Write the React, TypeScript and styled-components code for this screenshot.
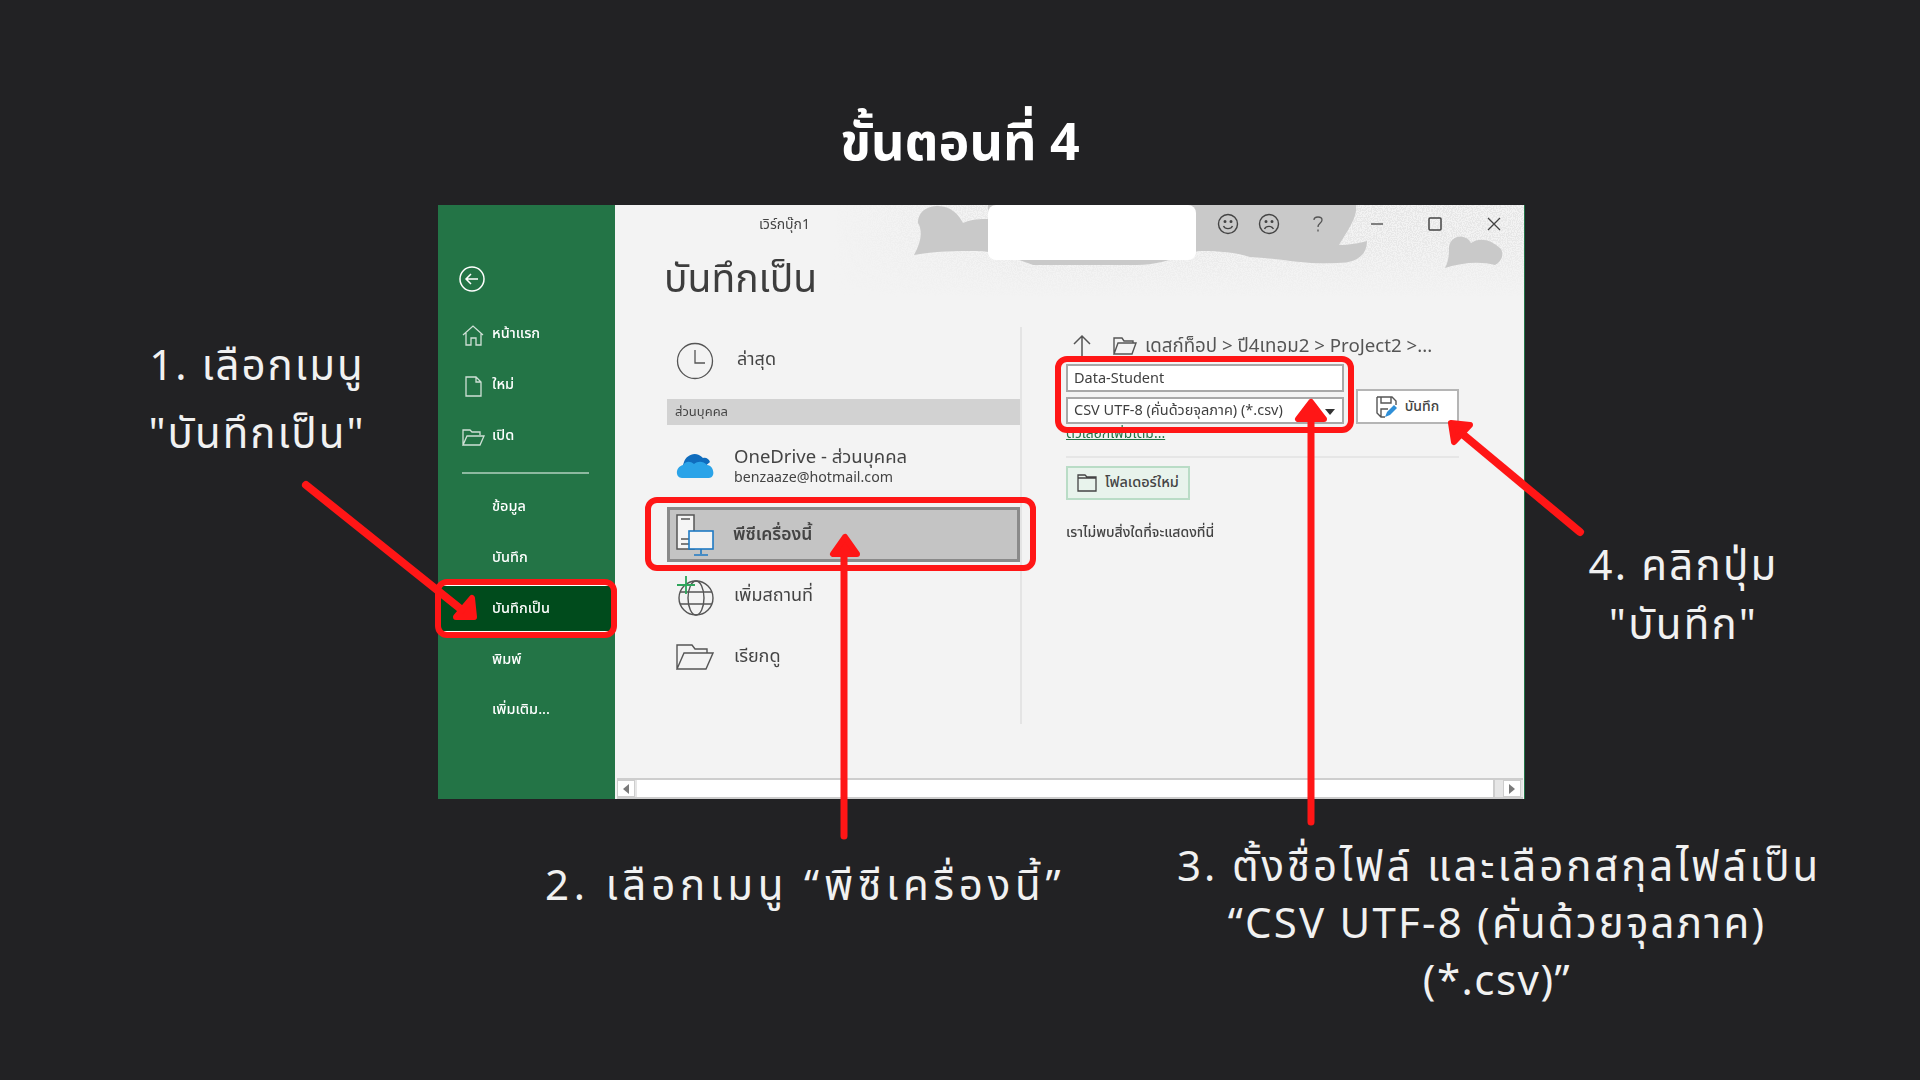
import React, { FC } from 'react';
import styled, { createGlobalStyle, css } from 'styled-components';

const thai = `"Noto Sans Thai", "Noto Sans", "Open Sans", "Liberation Sans", sans-serif`;
const red = '#ff1616';

const GlobalStyle = createGlobalStyle`
  html, body {
    margin: 0;
    background: #222224;
  }
  * {
    box-sizing: border-box;
  }
`;

const soft = css`
  filter: blur(0.3px);
`;

const Slide = styled.div`
  position: relative;
  width: 1920px;
  height: 1080px;
  overflow: hidden;
  background: #222224;
  font-family: ${thai};
`;

const Title = styled.h1`
  height: 205px;
  margin: 0;
  padding-top: 111px;
  text-align: center;
  color: #fff;
  font-size: 52px;
  font-weight: 700;
  line-height: 66px;
`;

const Stage = styled.div`
  display: flex;
  height: 594px;
`;

const LeftNotes = styled.div`
  width: 438px;
  flex: none;
  padding: 128px 0 0 76px;
`;

const RightNotes = styled.div`
  width: 395px;
  flex: none;
  padding: 333px 78px 0 0;
`;

const Note = styled.p<{ $lh: number; $track: number }>`
  margin: 0;
  text-align: center;
  color: #f1f1f1;
  font-size: 42px;
  line-height: ${(p) => p.$lh}px;
  letter-spacing: ${(p) => p.$track}px;
  white-space: nowrap;
`;

const NoteLine = styled.span<{ $track: number }>`
  display: block;
  letter-spacing: ${(p) => p.$track}px;
`;

const BottomNotes = styled.div`
  display: flex;
  padding-left: 545px;
`;

const NoteTwo = styled.div`
  width: 632px;
  padding-top: 60px;
`;

const NoteThree = styled.div`
  width: 640px;
  padding-top: 41px;
`;

const LeftNote = styled(Note)`
  text-align: left;
`;

const Window = styled.div`
  display: flex;
  flex: none;
  width: 1087px;
  background: #f3f3f3;
  border-right: 1px solid #217346;
`;

const Sidebar = styled.nav`
  width: 177px;
  flex: none;
  padding-top: 61px;
  background: #237446;
  color: #fff;
`;

const Back = styled.div`
  height: 26px;
  margin: 0 0 17px 21px;
`;

const SideRow = styled.div<{ $active?: boolean }>`
  position: relative;
  display: flex;
  align-items: center;
  height: 50.7px;
  padding-left: 54px;
  font-size: 14.5px;
  font-weight: 500;
  ${(p) =>
    p.$active &&
    css`
      height: 47px;
      margin: 2px 0;
      background: #004b1c;
      border-top: 1px solid #fff;
      border-bottom: 1px solid #fff;
    `}
`;

const SideIcon = styled.span`
  position: absolute;
  left: 23px;
  top: 14px;
  width: 24px;
  height: 24px;
`;

const SideLabel = styled.span`
  ${soft};
`;

const SideDivider = styled.hr`
  width: 127px;
  height: 2px;
  margin: 11px 0 8px 24px;
  border: 0;
  background: #8db9a0;
`;

const Frame = styled.div<{ $t: number; $r: number; $b: number; $l: number }>`
  position: absolute;
  top: ${(p) => p.$t}px;
  right: ${(p) => p.$r}px;
  bottom: ${(p) => p.$b}px;
  left: ${(p) => p.$l}px;
  z-index: 3;
  border: 6px solid ${red};
  border-radius: 12px;
  pointer-events: none;
`;

const Main = styled.main`
  position: relative;
  flex: 1;
  min-width: 0;
  display: flex;
  flex-direction: column;
  color: #444;
`;

const Backdrop = styled.svg`
  position: absolute;
  top: 0;
  left: 0;
`;

const Redacted = styled.div`
  position: absolute;
  top: 0;
  left: 373px;
  width: 208px;
  height: 55px;
  background: #fff;
  border-radius: 8px;
`;

const TitleBar = styled.header`
  position: relative;
  display: flex;
  align-items: center;
  height: 38px;
  padding-left: 144px;
`;

const WorkbookName = styled.span`
  width: 449px;
  font-size: 14px;
  ${soft};
`;

const BarIcon = styled.span<{ $w: number }>`
  display: flex;
  flex: none;
  justify-content: center;
  width: ${(p) => p.$w}px;
`;

const Heading = styled.h2`
  position: relative;
  margin: 16px 0 0 49px;
  font-size: 39px;
  font-weight: 400;
  line-height: 44px;
  color: #3d3d3d;
  ${soft};
`;

const Columns = styled.div`
  position: relative;
  display: flex;
  margin: 24px 0 0 52px;
`;

const Places = styled.div`
  width: 355px;
  height: 397px;
  border-right: 2px solid #e4e4e4;
`;

const Place = styled.div<{ $h: number; $mt?: number; $mb?: number }>`
  display: flex;
  align-items: center;
  gap: 20px;
  height: ${(p) => p.$h}px;
  margin-top: ${(p) => p.$mt ?? 0}px;
  margin-bottom: ${(p) => p.$mb ?? 0}px;
  padding-left: 9px;
`;

const PlaceIcon = styled.span`
  display: flex;
  width: 38px;
  justify-content: center;
`;

const PlaceLabel = styled.span`
  font-size: 18px;
  ${soft};
`;

const RecentLabel = styled(PlaceLabel)`
  margin: -3px 0 0 3px;
`;

const PcLabel = styled.span`
  font-size: 17.5px;
  font-weight: 600;
  ${soft};
`;

const PlaceGroup = styled.div`
  height: 26px;
  padding-left: 8px;
  background: #d2d2d2;
  font-size: 13px;
  line-height: 26px;
  ${soft};
`;

const DriveText = styled.div`
  padding-top: 2px;
  ${soft};
`;

const DriveName = styled.div`
  font-size: 18.5px;
  line-height: 24px;
`;

const DriveMail = styled.div`
  font-size: 14.2px;
  line-height: 18px;
`;

const ThisPc = styled.div`
  position: relative;
  display: flex;
  align-items: center;
  gap: 19px;
  height: 55px;
  margin-top: 2px;
  padding-left: 6px;
  background: #c4c4c4;
  border: 3px solid #8a8a8a;
`;

const Detail = styled.div`
  width: 393px;
  margin-left: 44px;
`;

const Crumbs = styled.div`
  display: flex;
  align-items: center;
  height: 37px;
  padding-top: 1px;
  color: #555;
  font-size: 18.7px;
  white-space: nowrap;
`;

const CrumbUp = styled.span`
  display: flex;
  width: 47px;
  padding-left: 7px;
`;

const CrumbFolder = styled.span`
  display: flex;
  width: 32px;
`;

const CrumbText = styled.span`
  ${soft};
`;

const SaveRow = styled.div`
  display: flex;
  align-items: flex-end;
  gap: 12px;
`;

const Fields = styled.div`
  position: relative;
  display: flex;
  flex-direction: column;
  gap: 5px;
  width: 278px;
`;

const Field = styled.div<{ $h: number }>`
  position: relative;
  display: flex;
  align-items: center;
  height: ${(p) => p.$h}px;
  padding: 1px 0 0 6px;
  background: #fff;
  border: 2px solid #a8a8a8;
  font-size: 14.5px;
  color: #3f3f3f;
  white-space: nowrap;
`;

const FieldText = styled.span`
  ${soft};
`;

const Caret = styled.span`
  position: absolute;
  right: 7px;
  top: 10px;
  width: 0;
  height: 0;
  border: 5px solid transparent;
  border-top: 6px solid #333;
  border-bottom: 0;
`;

const SaveButton = styled.div`
  display: flex;
  align-items: center;
  justify-content: center;
  gap: 7px;
  width: 103px;
  height: 35px;
  background: #fff;
  border: 2px solid #b5b5b5;
  font-size: 14px;
  font-weight: 500;
  color: #444;
`;

const MoreLink = styled.div`
  margin-top: 2px;
  height: 16px;
  line-height: 16px;
  color: #217346;
  font-size: 14px;
  text-decoration: underline;
  ${soft};
`;

const Rule = styled.div`
  height: 2px;
  margin-top: 14px;
  background: #e6e6e6;
`;

const NewFolder = styled.div`
  display: flex;
  align-items: center;
  gap: 8px;
  width: 124px;
  height: 34px;
  margin-top: 8px;
  padding-left: 9px;
  background: #e8f3ec;
  border: 2px solid #b9dcc6;
  font-size: 14.5px;
  font-weight: 500;
  white-space: nowrap;
`;

const Empty = styled.div`
  margin-top: 24px;
  font-size: 14px;
  line-height: 18px;
  font-weight: 500;
  ${soft};
`;

const ScrollBar = styled.div`
  position: absolute;
  left: 2px;
  right: 1px;
  bottom: 0;
  display: flex;
  height: 21px;
  padding: 2px 0;
  background: #e6e6e6;
  border-top: 2px solid #cdcdcd;
  border-bottom: 2px solid #cdcdcd;
`;

const ScrollButton = styled.div<{ $flip?: boolean }>`
  display: flex;
  align-items: center;
  justify-content: center;
  width: 18px;
  flex: none;
  background: #fff;
  border: 1px solid #cdcdcd;
  margin-top: -2px;
  height: 17px;
  &::before {
    content: '';
    border-style: solid;
    border-width: 5px 6px 5px 0;
    border-color: transparent #7a7a7a transparent transparent;
    ${(p) => p.$flip && 'transform: scaleX(-1);'}
  }
`;

const ScrollThumb = styled.div`
  width: 858px;
  margin: -2px 8px 0 2px;
  height: 17px;
  background: #fff;
  border-right: 2px solid #cdcdcd;
`;

const Arrows = styled.svg`
  position: absolute;
  top: 0;
  left: 0;
  z-index: 5;
  pointer-events: none;
`;

const Icon: FC<{ w: number; h: number; stroke?: string; sw?: number; children: React.ReactNode }> = ({
  w,
  h,
  stroke = '#555',
  sw = 1.3,
  children,
}) => (
  <svg width={w} height={h} viewBox={`0 0 ${w} ${h}`} fill="none" stroke={stroke} strokeWidth={sw}>
    {children}
  </svg>
);

const Clouds = () => (
  <Backdrop width={909} height={92} viewBox="0 0 909 92">
    <defs>
      <filter id="speckle" x="0" y="0" width="100%" height="100%">
        <feTurbulence type="fractalNoise" baseFrequency="0.8" numOctaves="2" seed="4" />
        <feColorMatrix values="0 0 0 0 0.8  0 0 0 0 0.8  0 0 0 0 0.8  0 0 0 9 -4" />
      </filter>
      <linearGradient id="fade" x1="0" y1="0" x2="0" y2="1">
        <stop offset="0.35" stopColor="#fff" />
        <stop offset="1" stopColor="#000" />
      </linearGradient>
      <linearGradient id="fadeX" x1="0" y1="0" x2="1" y2="0">
        <stop offset="0.24" stopColor="#000" stopOpacity="1" />
        <stop offset="0.45" stopColor="#000" stopOpacity="0" />
      </linearGradient>
      <mask id="fadeMask">
        <rect width="909" height="92" fill="url(#fade)" />
        <rect width="909" height="92" fill="url(#fadeX)" />
      </mask>
    </defs>
    <g mask="url(#fadeMask)">
      <rect width="909" height="92" filter="url(#speckle)" />
    </g>
    <path
      d="M299 50 C306 38 308 26 303 18 C303 6 313 1 323 1 C336 1 344 10 348 18 C356 14 366 14 373 14 L373 0 L741 0 C742 10 738 18 724 40 C734 40 745 38 752 36 C752 50 742 58 722 58 C690 60 665 53 635 52 C615 46 598 46 583 46 C560 54 540 60 522 60 L418 60 C395 52 380 46 360 46 C340 46 320 46 299 50 Z"
      fill="#c9c9c9"
    />
    <path
      d="M830 63 C834 56 834 48 834 42 C836 30 850 28 856 38 C864 32 876 34 886 44 C890 52 884 58 880 60 C864 56 846 58 830 63 Z"
      fill="#c9c9c9"
    />
  </Backdrop>
);

const ArrowLayer = () => (
  <Arrows width={1920} height={1080} viewBox="0 0 1920 1080">
    <g stroke={red} fill={red} strokeLinejoin="round" strokeLinecap="round">
      <path d="M306 485 L462 610" strokeWidth={8} fill="none" />
      <polygon points="472,598 474,617 456,617" strokeWidth={6} />
      <path d="M844 836 L844 552" strokeWidth={7} fill="none" />
      <polygon points="845,537 833,554 857,554" strokeWidth={6} />
      <path d="M1311 822 L1311 418" strokeWidth={7} fill="none" />
      <polygon points="1311,402 1298,419 1324,419" strokeWidth={6} />
      <path d="M1580 532 L1460 432" strokeWidth={8} fill="none" />
      <polygon points="1451,423 1470,425 1454,442" strokeWidth={6} />
    </g>
  </Arrows>
);

const App: FC = () => (
  <Slide>
    <GlobalStyle />
    <Title>ขั้นตอนที่ 4</Title>
    <Stage>
      <LeftNotes>
        <Note $lh={68} $track={2}>
          1. เลือกเมนู
          <br />
          "บันทึกเป็น"
        </Note>
      </LeftNotes>
      <Window>
        <Sidebar>
          <Back>
            <Icon w={28} h={28} stroke="#fff" sw={1.5}>
              <circle cx="13" cy="13" r="12" />
              <path d="M19 13H7M12 8l-5 5 5 5" />
            </Icon>
          </Back>
          <SideRow>
            <SideIcon>
              <Icon w={24} h={24} stroke="#cfe0d6">
                <path d="M2 12 L12 3 L22 12 M5 10 V22 H10 V15 H15 V22 H20 V10" />
              </Icon>
            </SideIcon>
            <SideLabel>หน้าแรก</SideLabel>
          </SideRow>
          <SideRow>
            <SideIcon>
              <Icon w={24} h={24} stroke="#cfe0d6">
                <path d="M5 3 H15 L20 8 V22 H5 Z M15 3 V8 H20" />
              </Icon>
            </SideIcon>
            <SideLabel>ใหม่</SideLabel>
          </SideRow>
          <SideRow>
            <SideIcon>
              <Icon w={24} h={24} stroke="#cfe0d6">
                <path d="M2 21 V6 H9 L11 8 H19 V11 M2 21 L6 12 H23 L19 21 Z" />
              </Icon>
            </SideIcon>
            <SideLabel>เปิด</SideLabel>
          </SideRow>
          <SideDivider />
          <SideRow>
            <SideLabel>ข้อมูล</SideLabel>
          </SideRow>
          <SideRow>
            <SideLabel>บันทึก</SideLabel>
          </SideRow>
          <SideRow $active>
            <SideLabel>บันทึกเป็น</SideLabel>
            <Frame $t={-7} $r={-2} $b={-7} $l={-3} />
          </SideRow>
          <SideRow>
            <SideLabel>พิมพ์</SideLabel>
          </SideRow>
          <SideRow>
            <SideLabel>เพิ่มเติม...</SideLabel>
          </SideRow>
        </Sidebar>
        <Main>
          <Clouds />
          <Redacted />
          <TitleBar>
            <WorkbookName>เวิร์กบุ๊ก1</WorkbookName>
            <BarIcon $w={42}>
              <Icon w={22} h={22} stroke="#444" sw={1.4}>
                <circle cx="11" cy="11" r="9.5" />
                <circle cx="8" cy="8.5" r="0.8" />
                <circle cx="14" cy="8.5" r="0.8" />
                <path d="M6.5 13 C8 16.5 14 16.5 15.5 13" />
              </Icon>
            </BarIcon>
            <BarIcon $w={40}>
              <Icon w={22} h={22} stroke="#444" sw={1.4}>
                <circle cx="11" cy="11" r="9.5" />
                <circle cx="8" cy="8.5" r="0.8" />
                <circle cx="14" cy="8.5" r="0.8" />
                <path d="M6.5 16 C8 12.5 14 12.5 15.5 16" />
              </Icon>
            </BarIcon>
            <BarIcon $w={58}>
              <Icon w={14} h={20}>
                <path d="M3 6 C3 2 11 2 11 6 C11 9 7 9 7 13 M7 15.5 V17.5" />
              </Icon>
            </BarIcon>
            <BarIcon $w={60}>
              <Icon w={14} h={14} stroke="#444">
                <path d="M1 7 H13" />
              </Icon>
            </BarIcon>
            <BarIcon $w={56}>
              <Icon w={14} h={14} stroke="#444" sw={1.5}>
                <rect x="1" y="1" width="12" height="12" rx="1" />
              </Icon>
            </BarIcon>
            <BarIcon $w={61}>
              <Icon w={14} h={14} stroke="#444">
                <path d="M1 1 L13 13 M13 1 L1 13" />
              </Icon>
            </BarIcon>
          </TitleBar>
          <Heading>บันทึกเป็น</Heading>
          <Columns>
            <Places>
              <Place $h={68} $mb={4}>
                <PlaceIcon>
                  <Icon w={38} h={38}>
                    <circle cx="19" cy="19" r="17.5" />
                    <path d="M19 8 V21 H29" />
                  </Icon>
                </PlaceIcon>
                <RecentLabel>ล่าสุด</RecentLabel>
              </Place>
              <PlaceGroup>ส่วนบุคคล</PlaceGroup>
              <Place $h={80}>
                <PlaceIcon>
                  <svg width={38} height={26} viewBox="0 0 38 26">
                    <path d="M8 10 C10 3 20 -2 27 6 C30 5 33 7 34 10 L20 22 L6 16 Z" fill="#0f6cbd" />
                    <path d="M6 26 C-1 26 -1 15 7 13 C10 9 14 9 18 12 C22 9 27 9 31 13 C38 13 40 26 33 26 Z" fill="#2aa3e8" />
                  </svg>
                </PlaceIcon>
                <DriveText>
                  <DriveName>OneDrive - ส่วนบุคคล</DriveName>
                  <DriveMail>benzaaze@hotmail.com</DriveMail>
                </DriveText>
              </Place>
              <ThisPc>
                <PlaceIcon>
                  <svg width={38} height={44} viewBox="0 0 38 44" fill="none">
                    <path d="M1 2 H18 V36 H1 Z" stroke="#555" strokeWidth={1.5} fill="#f5f5f5" />
                    <path d="M5 6 H14 M5 26 H14 M5 31 H14" stroke="#555" strokeWidth={1.5} />
                    <rect x="13" y="18" width="24" height="18" fill="#f5f5f5" stroke="#1f7ac4" strokeWidth={1.6} />
                    <path d="M25 36 V41 M18 42 H32" stroke="#1f7ac4" strokeWidth={1.6} />
                  </svg>
                </PlaceIcon>
                <PcLabel>พีซีเครื่องนี้</PcLabel>
                <Frame $t={-13} $r={-19} $b={-12} $l={-25} />
              </ThisPc>
              <Place $h={61} $mt={3}>
                <PlaceIcon>
                  <svg width={38} height={42} viewBox="0 0 38 42" fill="none">
                    <circle cx="20" cy="23" r="17" stroke="#555" strokeWidth={1.4} />
                    <ellipse cx="20" cy="23" rx="8" ry="17" stroke="#555" strokeWidth={1.4} />
                    <path d="M4 17 H36 M4 29 H36" stroke="#555" strokeWidth={1.4} />
                    <path d="M10 1 V19 M1 10 H19" stroke="#2ea55b" strokeWidth={1.8} />
                  </svg>
                </PlaceIcon>
                <PlaceLabel>เพิ่มสถานที่</PlaceLabel>
              </Place>
              <Place $h={61}>
                <PlaceIcon>
                  <Icon w={38} h={26} sw={1.4}>
                    <path d="M1 25 V1 H16 L19 5 H31 V9 M1 25 L8 9 H37 L30 25 Z" />
                  </Icon>
                </PlaceIcon>
                <PlaceLabel>เรียกดู</PlaceLabel>
              </Place>
            </Places>
            <Detail>
              <Crumbs>
                <CrumbUp>
                  <Icon w={18} h={24} sw={1.5}>
                    <path d="M9 22 V3 M1 10 L9 2 L17 10" />
                  </Icon>
                </CrumbUp>
                <CrumbFolder>
                  <Icon w={24} h={18} sw={1.4}>
                    <path d="M1 17 V1 H9 L11 4 H20 V6 M1 17 L5 6 H23 L19 17 Z" />
                  </Icon>
                </CrumbFolder>
                <CrumbText>เดสก์ท็อป &gt; ปี4เทอม2 &gt; ProJect2 &gt;...</CrumbText>
              </Crumbs>
              <SaveRow>
                <Fields>
                  <Field $h={28}>
                    <FieldText>Data-Student</FieldText>
                  </Field>
                  <Field $h={27}>
                    <FieldText>CSV UTF-8 (คั่นด้วยจุลภาค) (*.csv)</FieldText>
                    <Caret />
                  </Field>
                  <Frame $t={-8} $r={-10} $b={-9} $l={-11} />
                </Fields>
                <SaveButton>
                  <svg width={22} height={22} viewBox="0 0 22 22" fill="none">
                    <path d="M1 1 H16 L20 5 V9 M1 1 V17 L5 21 H9 M5 21 V13 H12" stroke="#555" strokeWidth={1.4} />
                    <path d="M5 1 V7 H15 V1" stroke="#555" strokeWidth={1.4} />
                    <path d="M9 21 L11 16 L18 9 L21 12 L14 19 Z" fill="#2f8fd8" />
                  </svg>
                  บันทึก
                </SaveButton>
              </SaveRow>
              <MoreLink>ตัวเลือกเพิ่มเติม...</MoreLink>
              <Rule />
              <NewFolder>
                <Icon w={20} h={18} stroke="#444">
                  <path d="M1 17 V1 H8 L10 3 H19 V17 Z M1 4 H19" />
                </Icon>
                โฟลเดอร์ใหม่
              </NewFolder>
              <Empty>เราไม่พบสิ่งใดที่จะแสดงที่นี่</Empty>
            </Detail>
          </Columns>
          <ScrollBar>
            <ScrollButton />
            <ScrollThumb />
            <ScrollButton $flip />
          </ScrollBar>
        </Main>
      </Window>
      <RightNotes>
        <Note $lh={59} $track={2.2}>
          4. คลิกปุ่ม
          <br />
          "บันทึก"
        </Note>
      </RightNotes>
    </Stage>
    <BottomNotes>
      <NoteTwo>
        <LeftNote $lh={57} $track={4.8}>
          2. เลือกเมนู “พีซีเครื่องนี้”
        </LeftNote>
      </NoteTwo>
      <NoteThree>
        <Note $lh={57} $track={2.8}>
          <NoteLine $track={2.9}>3. ตั้งชื่อไฟล์ และเลือกสกุลไฟล์เป็น</NoteLine>
          <NoteLine $track={2.2}>“CSV UTF-8 (คั่นด้วยจุลภาค)</NoteLine>
          <NoteLine $track={1.5}>(*.csv)”</NoteLine>
        </Note>
      </NoteThree>
    </BottomNotes>
    <ArrowLayer />
  </Slide>
);

export default App;
